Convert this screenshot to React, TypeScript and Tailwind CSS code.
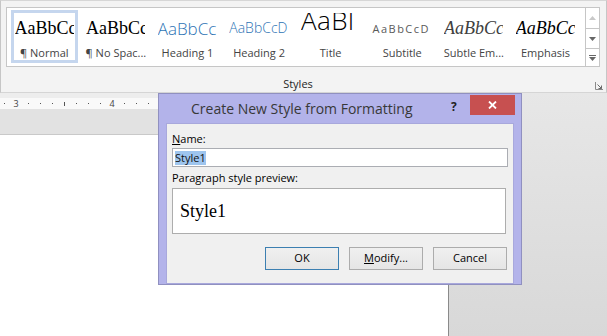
import React from "react";

type Item = { label: string; sample: string; cls: string; sel?: boolean };

const items: Item[] = [
  { label: "¶ Normal", sample: "AaBbCc", cls: "font-['Liberation_Serif',serif] text-[18px] leading-[30px] text-black", sel: true },
  { label: "¶ No Spac...", sample: "AaBbCc", cls: "font-['Liberation_Serif',serif] text-[18px] leading-[30px] text-black" },
  { label: "Heading 1", sample: "AaBbCc", cls: "font-['Open_Sans',sans-serif] font-light text-[17px] leading-[31px] text-[#2e74b5]" },
  { label: "Heading 2", sample: "AaBbCcD", cls: "font-['Open_Sans',sans-serif] font-light text-[14px] leading-[29px] text-[#2e74b5]" },
  { label: "Title", sample: "AaBl", cls: "font-['Open_Sans',sans-serif] font-light text-[26px] leading-[15px] tracking-[0.5px] text-black" },
  { label: "Subtitle", sample: "AaBbCcD", cls: "font-['Open_Sans',sans-serif] text-[11px] leading-[31px] tracking-[1.5px] text-[#5a5a5a]" },
  { label: "Subtle Em...", sample: "AaBbCc", cls: "font-['Liberation_Serif',serif] italic text-[18px] leading-[30px] text-[#404040]" },
  { label: "Emphasis", sample: "AaBbCc", cls: "font-['Liberation_Serif',serif] italic text-[18px] leading-[30px] text-black" },
];

type Tick = "dot" | "tick" | string;
const ruler: Tick[] = ["dot", "3", "dot", "dot", "dot", "tick", "dot", "dot", "dot", "4", "dot", "dot", "dot", "tick"];

function Btn({ children, primary }: { children: React.ReactNode; primary?: boolean }) {
  return (
    <div
      className={
        "w-[74px] h-[23px] flex items-center justify-center text-[11px] text-black bg-gradient-to-b from-[#f0f0f0] to-[#e5e5e5] border " +
        (primary ? "border-[#3c7fb1]" : "border-[#acacac]")
      }
    >
      {children}
    </div>
  );
}

export default function App() {
  return (
    <div className="relative w-[607px] h-[336px] overflow-hidden bg-white font-['Open_Sans','Noto_Sans',sans-serif]">
      {/* Ribbon */}
      <div className="relative box-border h-[93px] bg-[#f3f3f3] border-t border-b border-l border-r border-t-[#d6d6d6] border-b-[#d5d5d5] border-l-[#c6c6c6] border-r-[#c6c6c6] pt-[6px] pl-[5px] flex flex-col">
        <div className="flex w-[594px] h-[60px] bg-white border border-[#c6c6c6]">
          <div className="flex-1 flex pl-[1.5px]">
            {items.map((it) => (
              <div key={it.label} className="w-[71.6px] p-[2px] shrink-0">
                <div
                  className={
                    "h-[53px] border-[3px] flex flex-col " + (it.sel ? "border-[#c5d6ee]" : "border-transparent")
                  }
                >
                  <div className="ml-[1px] w-[59px] h-[27px] overflow-hidden whitespace-nowrap">
                    <div className={it.cls}>{it.sample}</div>
                  </div>
                  <div className="mt-[6px] text-center text-[11px] leading-[14px] text-[#444] whitespace-nowrap overflow-hidden">
                    {it.label}
                  </div>
                </div>
              </div>
            ))}
          </div>
          <div className="w-[14px] border-l border-[#c6c6c6] flex flex-col">
            <div className="h-[20px] flex items-center justify-center">
              <svg width="7" height="4" viewBox="0 0 7 4">
                <path d="M0 4 L3.5 0 L7 4 Z" fill="#c8c8c8" />
              </svg>
            </div>
            <div className="h-[20px] border-t border-[#c6c6c6] flex items-center justify-center">
              <svg width="7" height="4" viewBox="0 0 7 4">
                <path d="M0 0 L3.5 4 L7 0 Z" fill="#666" />
              </svg>
            </div>
            <div className="flex-1 border-t border-[#c6c6c6] flex flex-col items-center justify-center gap-[1px]">
              <div className="w-[7px] h-[1px] bg-[#666]" />
              <svg width="7" height="4" viewBox="0 0 7 4">
                <path d="M0 0 L3.5 4 L7 0 Z" fill="#666" />
              </svg>
            </div>
          </div>
        </div>
        <div className="relative mt-[10px] h-[14px] flex items-center justify-center pr-[16px]">
          <span className="text-[11px] leading-[14px] text-[#262626]">Styles</span>
          <svg className="absolute right-[3px] top-[5px]" width="8" height="8" viewBox="0 0 8 8">
            <path d="M0.5 0 V7.5 H8" fill="none" stroke="#8a8a8a" strokeWidth="1" />
            <path d="M2.5 2.5 L6.5 6.5 M6.5 3.5 V6.5 H3.5" fill="none" stroke="#6a6a6a" strokeWidth="1" />
          </svg>
        </div>
      </div>

      {/* Document area */}
      <div className="flex h-[243px]">
        <div className="w-[449px] flex flex-col">
          <div className="h-[5px] bg-[#ededed]" />
          <div className="h-[11px] bg-[#f9f9f9] flex items-center -ml-[2px] overflow-hidden">
            {ruler.map((t, i) => (
              <div key={i} className="w-[12px] shrink-0 flex items-center justify-center">
                {t === "dot" ? (
                  <div className="w-[1px] h-[1px] bg-[#555]" />
                ) : t === "tick" ? (
                  <div className="w-[1px] h-[4px] bg-[#555]" />
                ) : (
                  <span className="text-[9px] leading-[10px] text-[#444]">{t}</span>
                )}
              </div>
            ))}
          </div>
          <div className="h-[26px] bg-[#e2e2e2] border-b border-[#c9c9c9]" />
          <div className="flex-1 bg-white border-r border-[#8a8a8a]" />
        </div>
        <div className="flex-1 bg-gradient-to-b from-[#e7e7e7] to-[#d8d8d8]" />
      </div>

      {/* Dialog */}
      <div className="absolute left-[158px] top-[93px] w-[364px] h-[192px] bg-[#b3b3ea] border border-[#9090c0] flex flex-col">
        <div className="relative h-[29px] flex items-center pl-[32px]">
          <span className="text-[14px] text-[#383838] whitespace-nowrap">Create New Style from Formatting</span>
          <span className="absolute left-[292px] top-[4px] text-[12px] font-bold text-[#222]">?</span>
          <div className="absolute right-[6px] top-[1px] w-[45px] h-[20px] bg-[#c75050] flex items-center justify-center">
            <svg width="9" height="8" viewBox="0 0 9 8">
              <path d="M1 0.5 L8 7.5 M8 0.5 L1 7.5" stroke="white" strokeWidth="1.8" />
            </svg>
          </div>
        </div>
        <div className="mx-[7px] flex-1 bg-[#f0f0f0] border border-[#a8a8dc] pl-[5px] pr-[5px] pt-[8px] flex flex-col">
          <div className="text-[11px] leading-[14px] text-black">
            <span className="underline">N</span>ame:
          </div>
          <div className="mt-[2px] h-[19px] bg-white border border-[#abadb3] flex items-center pl-[2px]">
            <span className="bg-[#9ec5ee] text-[11px] leading-[14px] text-[#111]">Style1</span>
          </div>
          <div className="mt-[4px] text-[11px] leading-[14px] text-black">Paragraph style preview:</div>
          <div className="mt-[3px] mr-[2px] h-[46px] bg-white border border-[#adadad] flex items-center pl-[7px]">
            <span className="font-['Liberation_Serif',serif] text-[18px] leading-[18px] text-black">Style1</span>
          </div>
          <div className="mt-[13px] flex justify-end gap-[10px] pr-[1px]">
            <Btn primary>OK</Btn>
            <Btn>
              <span>
                <span className="underline">M</span>odify...
              </span>
            </Btn>
            <Btn>Cancel</Btn>
          </div>
        </div>
      </div>
    </div>
  );
}
